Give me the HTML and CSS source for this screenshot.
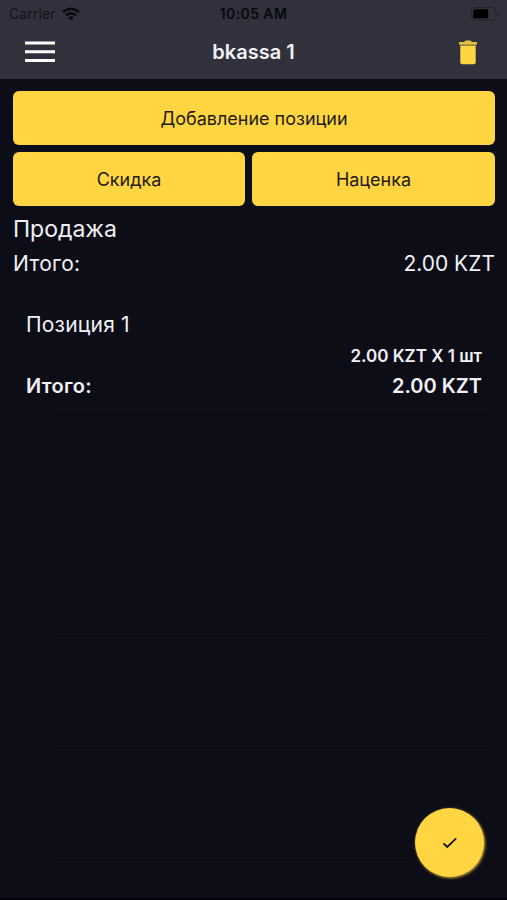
FILE: index.html
```html
<!doctype html>
<html lang="ru">

<head>
    <meta charset="utf-8">
    <meta name="viewport" content="width=device-width, initial-scale=1">
    <title>bkassa 1</title>
    <link rel="stylesheet" href="styles.css">
</head>

<body>
    <header class="header">
        <div class="status">
            <div class="carrier">
                <span>Carrier</span>
                <svg class="wifi" viewBox="0 0 18 14" width="18" height="14">
                    <g fill="none" stroke="#08080d" stroke-width="2.4">
                        <path d="M1 5.1a11.5 11.5 0 0 1 16 0" />
                        <path d="M4 8.3a7.2 7.2 0 0 1 10 0" />
                    </g>
                    <path d="M9 13.6 6.2 10.7a4 4 0 0 1 5.6 0z" fill="#08080d" />
                </svg>
            </div>
            <span class="time">10:05 AM</span>
            <svg class="battery" viewBox="0 0 29 14" width="29" height="14">
                <rect x="0.5" y="0.5" width="24" height="12.5" rx="3" fill="none" stroke="#23232d" />
                <rect x="2.2" y="2.3" width="15" height="9" rx="1.5" fill="#000" />
                <path d="M26.2 4.7v4.4a2.4 2.4 0 0 0 0-4.4z" fill="#1f1f28" />
            </svg>
        </div>
        <div class="navbar">
            <button class="icon-button menu" aria-label="Меню">
                <svg viewBox="0 0 30 22" width="30" height="22">
                    <path d="M0 1.9h30M0 10.8h30M0 19.6h30" stroke="#fff" stroke-width="3" />
                </svg>
            </button>
            <h1 class="title">bkassa 1</h1>
            <button class="icon-button trash" aria-label="Удалить">
                <svg viewBox="0 0 20 25" width="20" height="25">
                    <path d="M1 2h5l1.6-1.4h4.8L14 2h5v2.8H1z" fill="#e5bf40" />
                    <path d="M2.3 5.4h15.4v16.8a2 2 0 0 1-2 2H4.3a2 2 0 0 1-2-2z" fill="#ffd542" />
                </svg>
            </button>
        </div>
    </header>

    <main class="content">
        <div class="actions">
            <button class="button wide">Добавление позиции</button>
            <button class="button">Скидка</button>
            <button class="button">Наценка</button>
        </div>

        <h2 class="operation">Продажа</h2>
        <div class="row total">
            <span class="label">Итого:</span>
            <span>2.00 KZT</span>
        </div>

        <ul class="list">
            <li class="item">
                <div class="item-name">Позиция 1</div>
                <div class="item-price">2.00 KZT X 1 шт</div>
                <div class="row item-total">
                    <span class="label">Итого:</span>
                    <span>2.00 KZT</span>
                </div>
            </li>
            <li class="item plain"></li>
            <li class="item"></li>
            <li class="item"></li>
            <li class="item"></li>
        </ul>
    </main>

    <button class="confirm" aria-label="Готово">
        <svg viewBox="0 0 16 12" width="16" height="12">
            <path d="M1.5 6.3 5.2 10 14.2 1.4" fill="none" stroke="#16140c" stroke-width="1.8" />
        </svg>
    </button>
</body>

</html>
```

FILE: styles.css
```css
* {
    box-sizing: border-box;
}

body {
    margin: 0;
    height: 900px;
    overflow: hidden;
    background-color: #0d0d17;
    border-bottom: 2px solid #030308;
    color: #f1f1f6;
    font-family: Inter, "Liberation Sans", sans-serif;
}

button {
    padding: 0;
    border: none;
    background: none;
    font-family: inherit;
}

svg {
    display: block;
}

.header {
    height: 79px;
    background-color: #30313d;
}

.status {
    display: grid;
    grid-template-columns: 1fr auto 1fr;
    align-items: center;
    height: 27px;
    padding: 0 9px;
    color: #08080d;
    font-size: 14px;
}

.carrier {
    display: flex;
    align-items: center;
    gap: 6px;
    color: #111119;
    letter-spacing: 0.1px;
}

.time {
    font-weight: 600;
    letter-spacing: 0.4px;
}

.battery {
    justify-self: end;
    margin-right: -2px;
}

.navbar {
    display: grid;
    grid-template-columns: 1fr auto 1fr;
    align-items: center;
    height: 50px;
    padding: 0 29px;
}

.menu {
    justify-self: start;
    margin-left: -4px;
}

.title {
    margin: 0;
    font-size: 20px;
    font-weight: 600;
}

.trash {
    justify-self: end;
}

.content {
    padding: 12px 12px 0 13px;
}

.actions {
    display: grid;
    grid-template-columns: 232px 1fr;
    gap: 7px;
}

.button {
    height: 54px;
    border-radius: 6px;
    background-color: #ffd542;
    color: #1f1b10;
    font-size: 18px;
}

.wide {
    grid-column: span 2;
}

.row {
    display: flex;
    justify-content: space-between;
}

.label {
    letter-spacing: 0.3px;
}

.operation {
    margin: 7px 0 0;
    font-size: 23px;
    font-weight: 400;
    line-height: 32px;
}

.total {
    margin-top: 3px;
    font-size: 21px;
    line-height: 32px;
}

.list {
    margin: 18px 0 0;
    padding: 0;
    list-style: none;
}

.item {
    height: 112.2px;
    padding: 11px 13px 0;
    background: linear-gradient(#11111c, #11111c) 36px 100% / 446px 1px no-repeat;
}

.plain {
    background: none;
}

.item-name {
    font-size: 21px;
    line-height: 32px;
    letter-spacing: 0.2px;
}

.item-price {
    font-size: 17px;
    font-weight: 600;
    line-height: 30px;
    text-align: right;
}

.item-total {
    font-size: 20px;
    font-weight: 600;
    line-height: 31px;
}

/* floating button over the list */
.confirm {
    position: absolute;
    right: 23px;
    bottom: 23px;
    display: flex;
    align-items: center;
    justify-content: center;
    width: 69px;
    height: 69px;
    border-radius: 50%;
    background-color: #ffd542;
    box-shadow: 1px 1px 3px #d9b336;
}
```
